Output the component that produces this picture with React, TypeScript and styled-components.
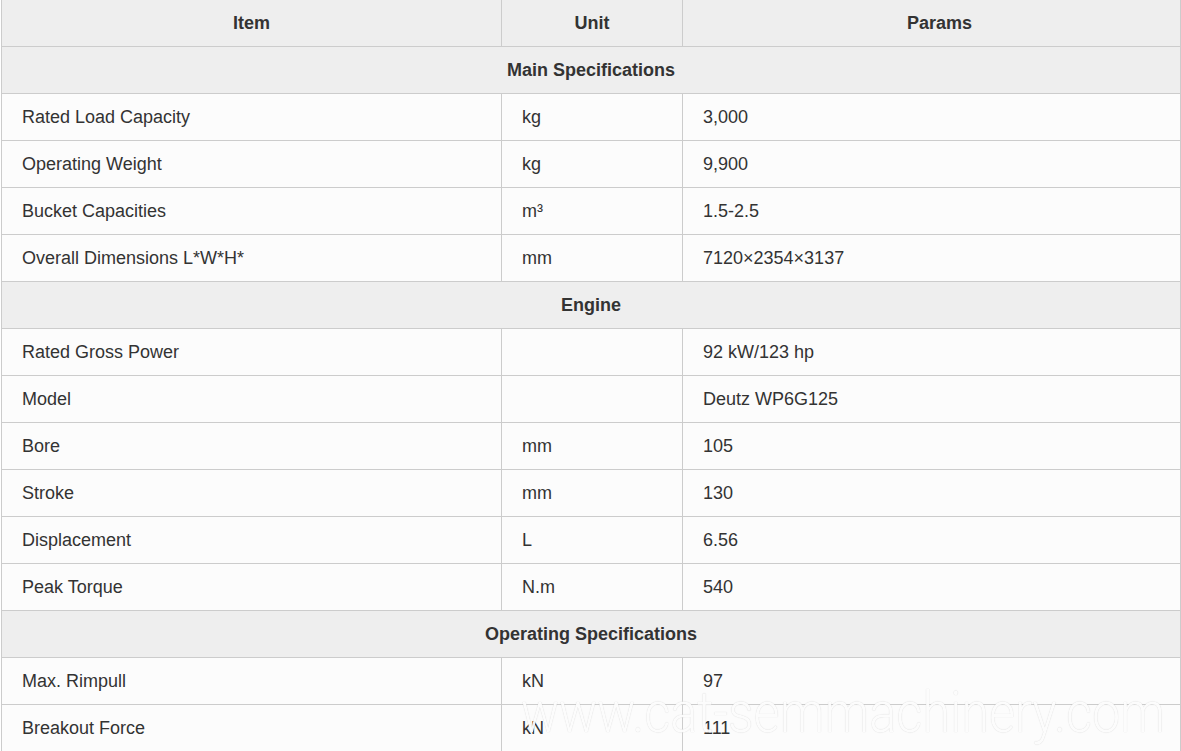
import React from "react";
import styled, { createGlobalStyle } from "styled-components";

const Global = createGlobalStyle`
  html, body { margin: 0; padding: 0; background: #ffffff; }
  body { font-family: "Liberation Sans", Arial, sans-serif; color: #333333; overflow: hidden; }
`;

const Wrap = styled.div`
  position: relative;
  width: 1181px;
  height: 751px;
  overflow: hidden;
`;

const Table = styled.div`
  margin-left: 1px;
  width: 1180px;
  border-left: 1px solid #cccccc;
  border-right: 1px solid #cccccc;
  box-sizing: border-box;
`;

const Row = styled.div<{ $shade?: boolean }>`
  display: grid;
  grid-template-columns: 500px 181px 1fr;
  height: 47px;
  box-sizing: border-box;
  border-bottom: 1px solid #cccccc;
  background: ${(p) => (p.$shade ? "#eeeeee" : "#fcfcfc")};
`;

const Cell = styled.div<{ $head?: boolean; $last?: boolean; $shift?: number }>`
  display: flex;
  align-items: center;
  justify-content: ${(p) => (p.$head ? "center" : "flex-start")};
  padding-left: ${(p) => (p.$head ? `${p.$shift ?? 0}px` : "20px")};
  box-sizing: border-box;
  border-right: ${(p) => (p.$last ? "none" : "1px solid #cccccc")};
  font-size: 18px;
  font-weight: ${(p) => (p.$head ? 700 : 400)};
  color: #333333;
  white-space: nowrap;
`;

const Section = styled.div`
  grid-column: 1 / -1;
  display: flex;
  align-items: center;
  justify-content: center;
  font-size: 18px;
  font-weight: 700;
  color: #333333;
`;

const Watermark = styled.div`
  position: absolute;
  left: 521px;
  top: 678px;
  font-family: Roboto, "Open Sans", sans-serif;
  font-size: 58px;
  font-weight: 300;
  transform: scaleX(0.87);
  transform-origin: left top;
  color: rgba(255, 255, 255, 0.94);
  text-shadow: 0 0 1px rgba(0, 0, 0, 0.2);
  white-space: nowrap;
  pointer-events: none;
`;

type Item =
  | { kind: "section"; title: string }
  | { kind: "row"; item: string; unit: string; value: string };

const data: Item[] = [
  { kind: "section", title: "Main Specifications" },
  { kind: "row", item: "Rated Load Capacity", unit: "kg", value: "3,000" },
  { kind: "row", item: "Operating Weight", unit: "kg", value: "9,900" },
  { kind: "row", item: "Bucket Capacities", unit: "m³", value: "1.5-2.5" },
  { kind: "row", item: "Overall Dimensions L*W*H*", unit: "mm", value: "7120×2354×3137" },
  { kind: "section", title: "Engine" },
  { kind: "row", item: "Rated Gross Power", unit: "", value: "92 kW/123 hp" },
  { kind: "row", item: "Model", unit: "", value: "Deutz WP6G125" },
  { kind: "row", item: "Bore", unit: "mm", value: "105" },
  { kind: "row", item: "Stroke", unit: "mm", value: "130" },
  { kind: "row", item: "Displacement", unit: "L", value: "6.56" },
  { kind: "row", item: "Peak Torque", unit: "N.m", value: "540" },
  { kind: "section", title: "Operating Specifications" },
  { kind: "row", item: "Max. Rimpull", unit: "kN", value: "97" },
  { kind: "row", item: "Breakout Force", unit: "kN", value: "111" },
];

export default function App() {
  return (
    <Wrap>
      <Global />
      <Table>
        <Row $shade>
          <Cell $head>Item</Cell>
          <Cell $head>Unit</Cell>
          <Cell $head $last $shift={16}>Params</Cell>
        </Row>
        {data.map((d, i) =>
          d.kind === "section" ? (
            <Row key={i} $shade>
              <Section>{d.title}</Section>
            </Row>
          ) : (
            <Row key={i}>
              <Cell>{d.item}</Cell>
              <Cell>{d.unit}</Cell>
              <Cell $last>{d.value}</Cell>
            </Row>
          )
        )}
      </Table>
      <Watermark>www.cat-semmachinery.com</Watermark>
    </Wrap>
  );
}
